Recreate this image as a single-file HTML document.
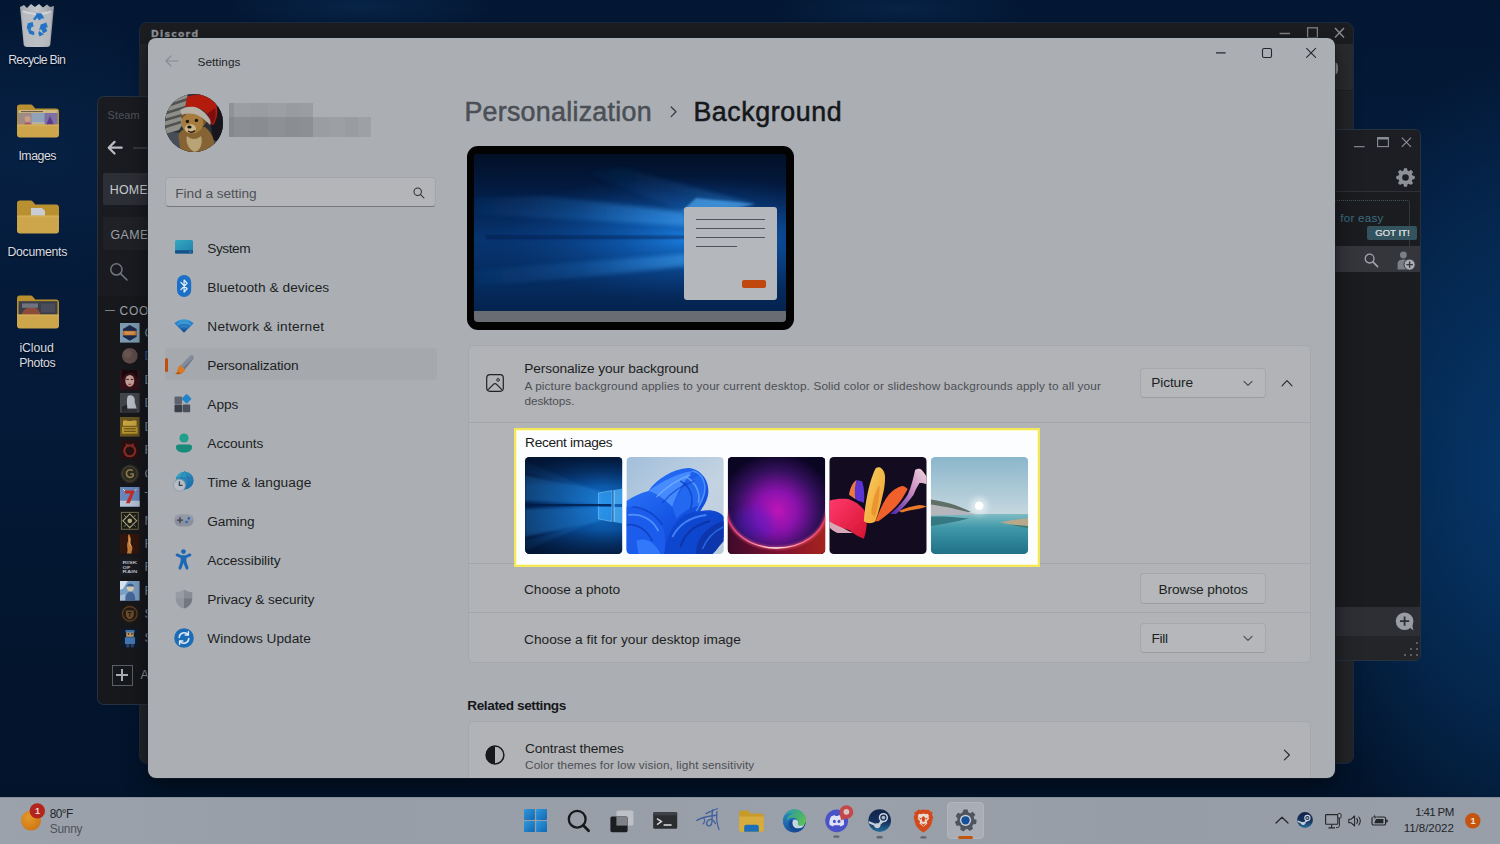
<!DOCTYPE html>
<html lang="en">
<head>
<meta charset="utf-8">
<title>Settings - Personalization - Background</title>
<style>
*{box-sizing:border-box;margin:0;padding:0}
html,body{width:1500px;height:844px;overflow:hidden;background:#04203f}
body{font-family:"Liberation Sans","DejaVu Sans",sans-serif;position:relative;color:#1b1d21}
.abs{position:absolute}
svg{display:block;overflow:visible}
.t{position:absolute;white-space:nowrap}
#desk{position:absolute;left:0;top:0;width:1500px;height:844px;overflow:hidden;
 background:
  radial-gradient(ellipse 230px 420px at 1520px 480px,rgba(6,56,108,.95),rgba(6,56,108,.5) 55%,rgba(6,56,108,0) 100%),
  radial-gradient(ellipse 140px 26px at 360px 6px,rgba(12,46,88,.55),rgba(12,46,88,0) 100%),
  radial-gradient(ellipse 130px 24px at 900px 8px,rgba(12,46,88,.5),rgba(12,46,88,0) 100%),
  radial-gradient(ellipse 220px 140px at 30px 150px,rgba(10,42,82,.45),rgba(10,42,82,0) 100%),
  linear-gradient(180deg,#031733 0,#041a39 20%,#041a38 50%,#03152d 78%,#02132a 100%);}
.win{position:absolute;overflow:hidden}
#tb{position:absolute;left:0;top:797px;width:1500px;height:47px;background:linear-gradient(90deg,#9ba2ac 0,#979ea8 20%,#989fa9 45%,#9aa1aa 55%,#969da6 75%,#999fa9 100%);box-shadow:inset 0 1px 0 #878e99}
</style>
</head>
<body>
<div id="desk"></div>

<svg class="abs" style="left:19px;top:3px" width="36" height="45" viewBox="0 0 36 45"><defs><linearGradient id="rb" x1="0" y1="0" x2="1" y2="0"><stop offset="0" stop-color="#a3a8ae"/><stop offset=".5" stop-color="#c4c8cc"/><stop offset="1" stop-color="#9499a0"/></linearGradient></defs><path d="M1 4 L5 2 L8 5 L12 1 L16 4 L20 1 L24 4.5 L28 1.5 L31 4 L35 3 L31.4 41 C31.3 43 30 44 28 44 H8 C6 44 4.7 43 4.6 41Z" fill="url(#rb)"/><path d="M3 8 L33 8 L30.6 40.5 C30.5 42 29.6 42.8 28 42.8 H8 C6.4 42.8 5.5 42 5.4 40.5Z" fill="#b9bdc2" opacity=".8"/><path d="M4 8 C10 12 14 9 18 12 C23 9 28 12 32 8" stroke="#d9dcdf" stroke-width="1.6" fill="none" opacity=".8"/><g fill="#2273c4" transform="translate(17.6 22) scale(1.22) translate(-17.6 -22)"><path d="M14.6 17.2 L18 12.6 L21.4 17.2 L19.6 18.2 L18 16 L16.4 18.2Z"/><path d="M17 12.4 H21.4 L24 16.4 L20.8 16.8Z"/><path d="M10.4 20.6 L14.4 19.6 L15.2 23.6 L13.6 23.2 L12.6 26.4 L9.4 24.6Z"/><path d="M10 25 L15.6 27.6 L15.6 30.4 L11.6 29.2Z"/><path d="M25.6 20 L26.8 24 L25 24 L26.4 27 L23 29 L21.4 25.4 L19.6 26.4 L21 21.6Z"/><path d="M19.6 27 L23.6 29.6 L20 31.4 L19 29Z"/></g></svg>
<div class="t" style="left:8.2px;top:52.0px;font-size:12.3px;line-height:16px;letter-spacing:-0.72px;color:#d9dde2;text-shadow:0 1px 2px rgba(0,0,0,.8);">Recycle Bin</div>
<svg class="abs" style="left:16.5px;top:104px" width="42" height="34" viewBox="0 0 42 34"><path d="M0 3.2 C0 1.4 1.2 .4 2.8 .4 H13.2 C14.4 .4 15.2 .8 16 1.8 L18.2 4.4 H39.2 C40.8 4.4 42 5.6 42 7.2 V22.6 H0Z" fill="#b8902f"/><rect x="1.6" y="6" width="38.8" height="15" fill="#8f92a4"/><rect x="1.6" y="6" width="38.8" height="3" fill="#cdb983"/><path d="M4 7.6 H26" stroke="#5a4a3a" stroke-width=".9"/><rect x="1.6" y="9" width="13" height="12" fill="#a08a86"/><rect x="14.6" y="9" width="13" height="12" fill="#8fa2b8"/><rect x="27.6" y="9" width="12.8" height="12" fill="#7e70a2"/><circle cx="10.6" cy="15" r="3" fill="#cb9c86"/><path d="M6.6 21 C7 17.6 14 17.6 14.6 21Z" fill="#b04a6a"/><path d="M29 21 L33 12 L37 21Z" fill="#5a3a8a"/><path d="M15 18 H27.6 V21 H15Z" fill="#b8b0a0"/><path d="M0 20.6 H42 V30.4 C42 32.2 40.8 33.4 39.2 33.4 H2.8 C1.2 33.4 0 32.2 0 30.4Z" fill="#cda64c"/><path d="M0 20.6 H42 V22.200000000000003 H0Z" fill="#d9b45c" opacity=".6"/></svg>
<div class="t" style="left:18.4px;top:148.0px;font-size:12.3px;line-height:16px;letter-spacing:-0.44px;color:#d9dde2;text-shadow:0 1px 2px rgba(0,0,0,.8);">Images</div>
<svg class="abs" style="left:16.5px;top:199.6px" width="42" height="34" viewBox="0 0 42 34"><path d="M0 3.2 C0 1.4 1.2 .4 2.8 .4 H13.2 C14.4 .4 15.2 .8 16 1.8 L18.2 4.4 H39.2 C40.8 4.4 42 5.6 42 7.2 V17.6 H0Z" fill="#b8902f"/><path d="M14 8 H25 L28 11 V19 H14Z" fill="#c9ccd2"/><path d="M0 15.6 H42 V30.4 C42 32.2 40.8 33.4 39.2 33.4 H2.8 C1.2 33.4 0 32.2 0 30.4Z" fill="#cda64c"/><path d="M0 15.6 H42 V17.2 H0Z" fill="#d9b45c" opacity=".6"/></svg>
<div class="t" style="left:7.4px;top:243.6px;font-size:12.3px;line-height:16px;letter-spacing:-0.28px;color:#d9dde2;text-shadow:0 1px 2px rgba(0,0,0,.8);">Documents</div>
<svg class="abs" style="left:16.5px;top:295.4px" width="42" height="34" viewBox="0 0 42 34"><path d="M0 3.2 C0 1.4 1.2 .4 2.8 .4 H13.2 C14.4 .4 15.2 .8 16 1.8 L18.2 4.4 H39.2 C40.8 4.4 42 5.6 42 7.2 V21.6 H0Z" fill="#b8902f"/><rect x="1.6" y="6.2" width="38.8" height="14" fill="#3c3e4a"/><path d="M4 20 C8 10.6 16 10.4 21 14.6 L24 20Z" fill="#8c4c3a"/><rect x="5" y="8.4" width="16" height="4.4" fill="#6f7480"/><rect x="24" y="8.4" width="14" height="9" fill="#4a4c5a"/><path d="M0 19.6 H42 V30.4 C42 32.2 40.8 33.4 39.2 33.4 H2.8 C1.2 33.4 0 32.2 0 30.4Z" fill="#cda64c"/><path d="M0 19.6 H42 V21.200000000000003 H0Z" fill="#d9b45c" opacity=".6"/></svg>
<div class="t" style="left:19.4px;top:339.6px;font-size:12.3px;line-height:16px;letter-spacing:-0.10px;color:#d9dde2;text-shadow:0 1px 2px rgba(0,0,0,.8);">iCloud</div>
<div class="t" style="left:19.2px;top:355.4px;font-size:12.3px;line-height:16px;letter-spacing:-0.35px;color:#d9dde2;text-shadow:0 1px 2px rgba(0,0,0,.8);">Photos</div>
<div class="win" id="discord" style="left:139.4px;top:21.5px;width:1214.6px;height:742px;background:#232428;border-radius:8px;border:1px solid #1b2a3f">
<div class="abs" style="left:0;top:0;width:1214px;height:21px;background:#1c1d20"></div>
<div class="abs" style="left:1190px;top:21px;width:24px;height:47px;background:#2a2b2f"></div>
<div class="abs" style="left:1190px;top:67.5px;width:24px;height:1px;background:#1e1f22"></div>
<div class="abs" style="left:1189px;top:39px;width:9px;height:13px;border-radius:6px;background:#8a8d92"></div>
<div class="t" style="left:10.6px;top:5.9px;font-family:'DejaVu Sans','Liberation Sans',sans-serif;font-weight:700;font-size:9.3px;line-height:12px;letter-spacing:1.25px;color:#8f9299;-webkit-text-stroke:.35px #8f9299">Discord</div>
<svg class="abs" style="left:1139px;top:4.5px" width="68" height="12" viewBox="0 0 68 12"><path d="M.6 6.4 H11" stroke="#7f838a" stroke-width="1.5"/><rect x="28.6" y=".8" width="9.8" height="9.8" fill="none" stroke="#7f838a" stroke-width="1.3"/><path d="M56 1 L65 10.6 M65 1 L56 10.6" stroke="#8b8f96" stroke-width="1.4"/></svg>
</div>
<div class="win" id="steam" style="left:97px;top:96px;width:70px;height:609px;background:#1a1b20;border-radius:7px 0 0 7px;border:1px solid #27313f;border-right:none"><div class="abs" style="left:0;top:1px;width:70px;height:608px">
<div class="t" style="left:9.6px;top:9.5px;font-size:10.8px;line-height:14px;letter-spacing:0.18px;color:#4f535c;">Steam</div>
<svg class="abs" style="left:9.4px;top:42.4px" width="16" height="15.4" viewBox="0 0 17 16"><path d="M15.6 8 H2.4 M8 1.8 L1.8 8 L8 14.2" fill="none" stroke="#b9bcc2" stroke-width="2.4" stroke-linecap="round" stroke-linejoin="round"/></svg>
<div class="abs" style="left:35px;top:49.2px;width:20px;height:2px;background:#33363d"></div>
<div class="abs" style="left:4.6px;top:75px;width:70px;height:32px;border-radius:2px;background:#2d2f36"></div>
<div class="t" style="left:11.7px;top:84.0px;font-size:12.4px;line-height:16px;letter-spacing:0.27px;color:#c9ccd1;">HOME</div>
<div class="abs" style="left:4.6px;top:119.4px;width:70px;height:32.4px;background:#1f2126"></div>
<div class="t" style="left:12.5px;top:129.2px;font-size:12.4px;line-height:16px;letter-spacing:0.44px;color:#9da1a8;">GAME</div>
<svg class="abs" style="left:11px;top:164.4px" width="20" height="20" viewBox="0 0 20 20"><circle cx="7.4" cy="7.4" r="5.6" fill="none" stroke="#70747c" stroke-width="1.5"/><path d="M11.6 11.6 L18 18" stroke="#70747c" stroke-width="1.6" stroke-linecap="round"/></svg>
<div class="abs" style="left:0;top:198px;width:70px;height:410px;background:#17181c"></div>
<div class="abs" style="left:7px;top:211.6px;width:9.5px;height:1.4px;background:#7b7f87"></div>
<div class="t" style="left:21.6px;top:204.7px;font-size:12px;line-height:16px;letter-spacing:0.70px;color:#9fa3aa;">COO</div>
<svg class="abs" style="left:21.6px;top:224.9px" width="19.6" height="19.6" viewBox="0 0 20 20"><rect width="20" height="20" fill="#7d9cb2"/><path d="M10 2 L17 6 V14 L10 18 L3 14 V6Z" fill="#1d2a4c"/><rect x="3" y="8" width="14" height="4.6" fill="#c4702c"/><path d="M5 9.4 H15 M5 11.2 H15" stroke="#e8c48a" stroke-width=".7"/></svg>
<div class="t" style="left:46.4px;top:226.9px;font-size:12.5px;line-height:16px;color:#8e9299">C</div>
<svg class="abs" style="left:21.6px;top:248.3px" width="19.6" height="19.6" viewBox="0 0 20 20"><circle cx="10" cy="10" r="9.6" fill="#17171a"/><circle cx="10" cy="10" r="8" fill="#5e4b48"/><circle cx="8" cy="8" r="4" fill="#6d5a56" opacity=".7"/></svg>
<div class="t" style="left:46.4px;top:250.3px;font-size:12.5px;line-height:16px;color:#2d5f9a">D</div>
<svg class="abs" style="left:21.6px;top:271.8px" width="19.6" height="19.6" viewBox="0 0 20 20"><rect width="20" height="20" fill="#34121a"/><path d="M2 0 H18 V9 C16 4 12 3 10 3 C7 3 4 5 2 10Z" fill="#1a0a0e"/><ellipse cx="10" cy="11" rx="4.6" ry="6" fill="#c4a098"/><path d="M6.4 9.6 H9 M11 9.6 H13.6" stroke="#3a1a1a" stroke-width="1"/><path d="M8.6 14.6 H11.4" stroke="#9a2a2a" stroke-width="1.1"/></svg>
<div class="t" style="left:46.4px;top:273.8px;font-size:12.5px;line-height:16px;color:#8e9299">D</div>
<svg class="abs" style="left:21.6px;top:295.2px" width="19.6" height="19.6" viewBox="0 0 20 20"><rect width="20" height="20" fill="#43454d"/><path d="M8 3 C12 1 16 4 15 9 L17 16 H7 C8 12 6 8 8 3Z" fill="#b9bcc3"/><path d="M2 14 L7 12 L8 19 H2Z" fill="#23252b"/><path d="M3 16 H17 V20 H3Z" fill="#2c2e35" opacity=".8"/></svg>
<div class="t" style="left:46.4px;top:297.2px;font-size:12.5px;line-height:16px;color:#8e9299">D</div>
<svg class="abs" style="left:21.6px;top:318.7px" width="19.6" height="19.6" viewBox="0 0 20 20"><rect width="20" height="20" fill="#6a5620"/><path d="M3 4 C6 2 8 5 10 4 C12 5 14 2 17 4 V9 H3Z" fill="#c8a640"/><rect x="2" y="10" width="16" height="7" fill="#b8962f"/><path d="M4 12 H16 M4 14.6 H16" stroke="#5a4618" stroke-width="1"/></svg>
<div class="t" style="left:46.4px;top:320.7px;font-size:12.5px;line-height:16px;color:#8e9299">D</div>
<svg class="abs" style="left:21.6px;top:342.1px" width="19.6" height="19.6" viewBox="0 0 20 20"><rect width="20" height="20" fill="#241214"/><circle cx="10" cy="11" r="5.6" fill="none" stroke="#8c2c22" stroke-width="2.2"/><path d="M6 4 L9 7 M14 4 L11 7" stroke="#8c2c22" stroke-width="1.6"/></svg>
<div class="t" style="left:46.4px;top:344.1px;font-size:12.5px;line-height:16px;color:#8e9299">F</div>
<svg class="abs" style="left:21.6px;top:365.6px" width="19.6" height="19.6" viewBox="0 0 20 20"><circle cx="10" cy="10" r="9.6" fill="#2c2a22"/><circle cx="10" cy="10" r="7.6" fill="none" stroke="#4a4636" stroke-width="1"/><path d="M13 6.6 C9 4.6 6 7 6.6 10.4 C7 13.6 11 14.6 13.4 12.4 V10.2 H10.4" fill="none" stroke="#8d7d4e" stroke-width="1.7"/></svg>
<div class="t" style="left:46.4px;top:367.6px;font-size:12.5px;line-height:16px;color:#8e9299">G</div>
<svg class="abs" style="left:21.6px;top:389.0px" width="19.6" height="19.6" viewBox="0 0 20 20"><rect width="20" height="20" fill="#6888bc"/><path d="M0 14 H20 V20 H0Z" fill="#b8c4d8"/><path d="M5 3.6 H15 L10 16.6 H6 L10.6 6.6 H5Z" fill="#c42c28"/><path d="M3 2 L5 4 M17 2 L15 4" stroke="#e8e0c0" stroke-width="1"/></svg>
<div class="t" style="left:46.4px;top:391.0px;font-size:12.5px;line-height:16px;color:#8e9299">T</div>
<svg class="abs" style="left:21.6px;top:412.5px" width="19.6" height="19.6" viewBox="0 0 20 20"><rect width="20" height="20" fill="#1b1b17"/><rect x="1.4" y="1.4" width="17.2" height="17.2" fill="none" stroke="#7a7458" stroke-width=".9"/><path d="M10 3 L17 10 L10 17 L3 10Z" fill="none" stroke="#b4ab84" stroke-width="1.1"/><circle cx="10" cy="10" r="2.4" fill="#b4ab84"/><path d="M4 4 L7 7 M16 4 L13 7 M4 16 L7 13 M16 16 L13 13" stroke="#8a8464" stroke-width="1"/></svg>
<div class="t" style="left:46.4px;top:414.5px;font-size:12.5px;line-height:16px;color:#8e9299">M</div>
<svg class="abs" style="left:21.6px;top:435.9px" width="19.6" height="19.6" viewBox="0 0 20 20"><rect width="20" height="20" fill="#33160e"/><path d="M9 0 C13 4 8 8 12 12 C14 15 11 18 12 20 H7 C9 16 6 12 8 8 C9 5 7 3 9 0Z" fill="#c27c3a"/><path d="M10 4 C11 7 9 9 11 12" stroke="#f0c070" stroke-width="1" fill="none"/></svg>
<div class="t" style="left:46.4px;top:437.9px;font-size:12.5px;line-height:16px;color:#8e9299">F</div>
<svg class="abs" style="left:21.6px;top:459.4px" width="19.6" height="19.6" viewBox="0 0 20 20"><rect width="20" height="20" fill="#191b21"/><text x="2.6" y="7.6" font-family="Liberation Sans,sans-serif" font-size="3.7" font-weight="700" fill="#b9bcc3" textLength="15" lengthAdjust="spacingAndGlyphs">RISK</text><text x="2.6" y="11.8" font-family="Liberation Sans,sans-serif" font-size="3.7" font-weight="700" fill="#b9bcc3" textLength="8" lengthAdjust="spacingAndGlyphs">OF</text><text x="2.6" y="16" font-family="Liberation Sans,sans-serif" font-size="3.7" font-weight="700" fill="#b9bcc3" textLength="15" lengthAdjust="spacingAndGlyphs">RAIN</text></svg>
<div class="t" style="left:46.4px;top:461.4px;font-size:12.5px;line-height:16px;color:#8e9299">F</div>
<svg class="abs" style="left:21.6px;top:482.8px" width="19.6" height="19.6" viewBox="0 0 20 20"><rect width="20" height="20" fill="#7ba0c6"/><path d="M0 0 L8 0 L3 8 L0 9Z" fill="#d8e2ee"/><circle cx="10.6" cy="7" r="3.6" fill="#d8ceb0"/><path d="M6.4 5.6 C8 1.6 13 1.6 14.8 5.6Z" fill="#3f5f92"/><path d="M5.6 20 C5.6 14 7.6 11 10.6 11 C13.6 11 15.6 14 15.6 20Z" fill="#46689c"/><path d="M0 15 L5 13 V20 H0Z" fill="#a8c0d8"/></svg>
<div class="t" style="left:46.4px;top:484.8px;font-size:12.5px;line-height:16px;color:#8e9299">F</div>
<svg class="abs" style="left:21.6px;top:506.3px" width="19.6" height="19.6" viewBox="0 0 20 20"><circle cx="10" cy="10" r="9.6" fill="#241b15"/><circle cx="10" cy="10" r="7.4" fill="none" stroke="#5e4226" stroke-width="1.2"/><path d="M6 6.6 H14 V11 C14 13.6 12 15 10 15.6 C8 15 6 13.6 6 11Z" fill="#6d4c2a"/><path d="M8 8.6 H12 M10 8.6 V13" stroke="#241b15" stroke-width="1.1"/></svg>
<div class="t" style="left:46.4px;top:508.3px;font-size:12.5px;line-height:16px;color:#8e9299">S</div>
<svg class="abs" style="left:21.6px;top:529.8px" width="19.6" height="19.6" viewBox="0 0 20 20"><rect width="20" height="20" fill="#101a28"/><rect x="6.4" y="3" width="7.6" height="6" fill="#c29e6c"/><rect x="5.6" y="2" width="9.2" height="2.6" fill="#3f73ae"/><rect x="5" y="9.4" width="10.4" height="7" fill="#4377b2"/><rect x="6.4" y="16.4" width="3" height="3.4" fill="#2c456c"/><rect x="11" y="16.4" width="3" height="3.4" fill="#2c456c"/><rect x="8" y="5.4" width="1.4" height="1.4" fill="#1a1a1a"/><rect x="11.4" y="5.4" width="1.4" height="1.4" fill="#1a1a1a"/></svg>
<div class="t" style="left:46.4px;top:531.8px;font-size:12.5px;line-height:16px;color:#8e9299">S</div>
<div class="abs" style="left:13.7px;top:566.5px;width:21px;height:21px;border:1px solid #5b5f67"></div><div class="abs" style="left:18.4px;top:576.2px;width:11.6px;height:1.6px;background:#a9adb3"></div><div class="abs" style="left:23.4px;top:571.2px;width:1.6px;height:11.6px;background:#a9adb3"></div>
<div class="t" style="left:42.4px;top:568.5px;font-size:12.5px;line-height:16px;color:#8e9299">A</div>
</div></div>
<div class="win" id="friends" style="left:1326px;top:129px;width:95px;height:532px;background:#1b1c20;border-radius:0 6px 6px 0;border:1px solid #27323f;border-left:none">
<div class="abs" style="left:0;top:0;width:95px;height:62px;background:#1d1e23"></div>
<svg class="abs" style="left:27px;top:6.1px" width="60" height="13" viewBox="0 0 60 13"><path d="M1 10.6 H11.6" stroke="#7e828a" stroke-width="1.2"/><rect x="24.6" y="1.6" width="10.8" height="9" fill="none" stroke="#8a8e96" stroke-width="1.1"/><path d="M24.6 2.6 H35.4" stroke="#8a8e96" stroke-width="2"/><path d="M48.8 1.6 L58 10.8 M58 1.6 L48.8 10.8" stroke="#8a8e96" stroke-width="1.2"/></svg>
<svg class="abs" style="left:70.4px;top:37.9px" width="19" height="19" viewBox="0 0 20 20"><path fill="#8d9096" fill-rule="evenodd" d="M8.3 .6 H11.7 L12.2 3.2 L13.9 3.9 L16.1 2.4 L18.5 4.8 L17 7 L17.7 8.7 L20.3 9.2 V12.6 L17.7 13.1 L17 14.8 L18.5 17 L16.1 19.4 L13.9 17.9 L12.2 18.6 L11.7 21.2 H8.3 L7.8 18.6 L6.1 17.9 L3.9 19.4 L1.5 17 L3 14.8 L2.3 13.1 L-.3 12.6 V9.2 L2.3 8.7 L3 7 L1.5 4.8 L3.9 2.4 L6.1 3.9 L7.8 3.2Z M10 7.2 A3.7 3.7 0 1 0 10 14.6 A3.7 3.7 0 1 0 10 7.2Z" transform="translate(.6 -.3) scale(.94)"/></svg>
<div class="abs" style="left:0;top:61.3px;width:95px;height:1px;background:#2f3137"></div>
<div class="abs" style="left:-20px;top:70px;width:103.5px;height:60px;border:1.4px dotted #47545e;border-radius:3px"></div>
<div class="t" style="left:14.2px;top:80.3px;font-size:11.6px;line-height:15px;letter-spacing:0.27px;color:#3b6c80;">for easy</div>
<div class="abs" style="left:41.4px;top:95.7px;width:49.6px;height:14.2px;border-radius:2px;background:#33545e"></div>
<div class="t" style="left:49.1px;top:96.8px;font-size:9.6px;line-height:12px;letter-spacing:-0.00px;color:#d3d8da;text-shadow:.3px 0 0 #d3d8da;">GOT IT!</div>
<div class="abs" style="left:0;top:115.7px;width:95px;height:26.2px;background:#34363c"></div>
<svg class="abs" style="left:38.4px;top:123.2px" width="15" height="15" viewBox="0 0 15 15"><circle cx="5.6" cy="5.6" r="4.4" fill="none" stroke="#a3a6ac" stroke-width="1.3"/><path d="M8.9 8.9 L13.6 13.6" stroke="#a3a6ac" stroke-width="1.5" stroke-linecap="round"/></svg>
<svg class="abs" style="left:70.5px;top:120.7px" width="19" height="20" viewBox="0 0 19 20"><circle cx="6.4" cy="4" r="3.4" fill="#7b7f86"/><path d="M.6 18.6 V12.4 C.6 9.8 2.6 8.4 6.4 8.4 C10.2 8.4 12.2 9.8 12.2 12.4 V18.6Z" fill="#7b7f86"/><circle cx="12.6" cy="13.6" r="5.6" fill="#a9acb2" stroke="#34363c" stroke-width="1"/><path d="M12.6 10.4 V16.8 M9.4 13.6 H15.8" stroke="#34363c" stroke-width="1.4"/></svg>
<div class="abs" style="left:0;top:477px;width:95px;height:29px;background:#2d2f35"></div>
<svg class="abs" style="left:69px;top:482.4px" width="20" height="20" viewBox="0 0 20 20"><path d="M13 14 L18.4 18.6 L17 12Z" fill="#9a9da3"/><circle cx="9.6" cy="9.2" r="8.8" fill="#9a9da3"/><path d="M9.6 4.6 V13.8 M5 9.2 H14.2" stroke="#2d2f35" stroke-width="1.8"/></svg>
<div class="abs" style="left:0;top:506px;width:95px;height:26px;background:#232529"></div>
<div class="abs" style="left:90px;top:512px;width:2.4px;height:2.4px;background:#5b5f66"></div>
<div class="abs" style="left:84px;top:518px;width:2.4px;height:2.4px;background:#5b5f66"></div>
<div class="abs" style="left:90px;top:518px;width:2.4px;height:2.4px;background:#5b5f66"></div>
<div class="abs" style="left:78px;top:524px;width:2.4px;height:2.4px;background:#5b5f66"></div>
<div class="abs" style="left:84px;top:524px;width:2.4px;height:2.4px;background:#5b5f66"></div>
<div class="abs" style="left:90px;top:524px;width:2.4px;height:2.4px;background:#5b5f66"></div>
</div>
<div class="win" id="set" style="left:148px;top:38.4px;width:1186.6px;height:739.6px;background:#abafb4;border-radius:8px;box-shadow:0 0 0 1px rgba(20,30,45,.6),0 8px 22px rgba(0,0,0,.5)">
<svg class="abs" style="left:17px;top:17px" width="14" height="12" viewBox="0 0 14 12"><path d="M13 6 H1.2 M6 1 L1 6 L6 11" fill="none" stroke="#858990" stroke-width="1.1" stroke-linecap="round" stroke-linejoin="round"/></svg>
<div class="t" style="left:49.5px;top:16.8px;font-size:11.8px;line-height:15px;letter-spacing:0.04px;color:#1d1f23;">Settings</div>
<svg class="abs" style="left:1067px;top:9px" width="104" height="12" viewBox="0 0 104 12"><path d="M1 5.9 H10.6" stroke="#24272c" stroke-width="1.1"/><rect x="47.5" y="1.5" width="9" height="9" rx="1.6" fill="none" stroke="#24272c" stroke-width="1.1"/><path d="M91.6 1.4 L100.6 10.4 M100.6 1.4 L91.6 10.4" stroke="#24272c" stroke-width="1.1" stroke-linecap="round"/></svg>
<div class="abs" id="ava" style="left:17.1px;top:56.1px;width:58.4px;height:57.8px;border-radius:50%;overflow:hidden;background:#2a2e35"><svg width="59" height="59" viewBox="0 0 59 59"><defs><filter id="ab" x="-10%" y="-10%" width="120%" height="120%"><feGaussianBlur stdDeviation=".7"/></filter></defs><rect width="59" height="59" fill="#2b3037"/><g filter="url(#ab)"><path d="M0 40 C10 36 20 40 30 44 C40 48 50 46 59 40 V59 H0Z" fill="#464d57"/><path d="M0 8 L22 0 L26 18 L14 36 L0 40Z" fill="#8e8f89"/><path d="M2 12 L23 5 M1 19 L24 12 M0 26 L21 20 M0 33 L16 28" stroke="#4f5153" stroke-width="2.4"/><path d="M44 18 L59 10 V50 L48 46Z" fill="#14161a"/><path d="M14 46 C12 40 16 36 20 35 L40 33 C46 38 52 46 48 59 H16Z" fill="#866432"/><path d="M22 42 C26 46 32 46 36 42 C38 48 36 56 30 58 C24 56 20 48 22 42Z" fill="#b8a377"/><path d="M15 22 L20 17 L21 29Z M36 19 L43 26 L38 33Z" fill="#745428"/><ellipse cx="27.4" cy="29" rx="11" ry="10.4" fill="#a57c3c"/><ellipse cx="25.4" cy="34.6" rx="5.6" ry="4.4" fill="#c9b68e"/><circle cx="22.4" cy="27.4" r="1.7" fill="#1b140e"/><circle cx="31.4" cy="26.4" r="1.7" fill="#1b140e"/><ellipse cx="24.4" cy="33" rx="2.2" ry="1.6" fill="#17110c"/><path d="M23 37 C25 38.6 28 38.4 30 36.6" stroke="#2a1a14" stroke-width="1.4" fill="none"/><path d="M22 3 C28 0 40 -1 46 4 C53 9 54 20 50 28 C49 31 47 32 46 30 C46 26 44 22 42 20 C38 15 30 12 20 13Z" fill="#b31a11"/><path d="M42 20 C46 24 47 28 46 31 C50 28 52 22 50 14Z" fill="#7f1009"/><path d="M15 16 C19 13 25 12 30 13 C36 15 41 19 44 24 C46 27 46 29 45 31 C42 28 38 24 34 22 C28 19 22 19 17 21Z" fill="#b7b0a5"/></g></svg></div>
<div class="abs" style="left:80.9px;top:64.5px;width:4.8px;height:14.4px;background:#8f9296"></div>
<div class="abs" style="left:85.5px;top:64.5px;width:16.7px;height:14.4px;background:#9b9ea2"></div>
<div class="abs" style="left:102.0px;top:64.5px;width:18.2px;height:14.4px;background:#999ca0"></div>
<div class="abs" style="left:120.0px;top:64.5px;width:18.2px;height:14.4px;background:#9c9fa3"></div>
<div class="abs" style="left:138.0px;top:64.5px;width:14.2px;height:14.4px;background:#989b9f"></div>
<div class="abs" style="left:152.0px;top:64.5px;width:12.7px;height:14.4px;background:#9a9da1"></div>
<div class="abs" style="left:80.9px;top:78.7px;width:4.8px;height:19.5px;background:#85888c"></div>
<div class="abs" style="left:85.5px;top:78.7px;width:16.7px;height:19.5px;background:#8b8e92"></div>
<div class="abs" style="left:102.0px;top:78.7px;width:18.2px;height:19.5px;background:#898c90"></div>
<div class="abs" style="left:120.0px;top:78.7px;width:18.2px;height:19.5px;background:#8d9094"></div>
<div class="abs" style="left:138.0px;top:78.7px;width:14.2px;height:19.5px;background:#8a8d91"></div>
<div class="abs" style="left:152.0px;top:78.7px;width:12.7px;height:19.5px;background:#8c8f93"></div>
<div class="abs" style="left:164.5px;top:78.7px;width:17.7px;height:19.5px;background:#9a9da1"></div>
<div class="abs" style="left:182.0px;top:78.7px;width:15.2px;height:19.5px;background:#9c9fa3"></div>
<div class="abs" style="left:197.0px;top:78.7px;width:13.2px;height:19.5px;background:#999ca0"></div>
<div class="abs" style="left:210.0px;top:78.7px;width:13.4px;height:19.5px;background:#9da0a4"></div>
<div class="abs" style="left:17px;top:139px;width:271px;height:30px;border-radius:4px;background:#b3b5b8;border:1px solid #a2a5a9;border-bottom:1.5px solid #74787e"></div>
<div class="t" style="left:27.3px;top:146.3px;font-size:13.7px;line-height:18px;letter-spacing:-0.06px;color:#4e5157;">Find a setting</div>
<svg class="abs" style="left:265px;top:148.5px" width="12" height="12" viewBox="0 0 12 12"><circle cx="4.7" cy="4.7" r="3.7" fill="none" stroke="#2a2d32" stroke-width="1.05"/><path d="M7.4 7.4 L11 11" stroke="#2a2d32" stroke-width="1.05" stroke-linecap="round"/></svg>
<div class="abs" style="left:17px;top:310px;width:272px;height:32px;border-radius:4px;background:#a5a8ad"></div>
<div class="abs" style="left:16.5px;top:319.5px;width:3px;height:14.5px;border-radius:1.5px;background:#bf4e10"></div>
<svg class="abs" style="left:26.6px;top:202.0px" width="18" height="14" viewBox="0 0 18 14"><defs><linearGradient id="gs" x1="0" y1="0" x2="1" y2="1"><stop offset="0" stop-color="#35a9bf"/><stop offset="1" stop-color="#1f7fae"/></linearGradient></defs><rect x="0" y="0" width="18" height="13.6" rx="1.6" fill="url(#gs)"/><rect x="0" y="10.3" width="18" height="3.3" rx="1.2" fill="#174f86"/><rect x="14" y="11.4" width="2.4" height="1" fill="#3f8fc0"/></svg>
<div class="t" style="left:59.3px;top:201.4px;font-size:13.7px;line-height:18px;letter-spacing:-0.47px;color:#1d1f23;">System</div>
<svg class="abs" style="left:28.5px;top:237.0px" width="14.2" height="22" viewBox="0 0 14.2 22"><rect x="0" y="0" width="14.2" height="22" rx="7.1" fill="#1a6fc6"/><path d="M3.9 7.4 L10.1 13.8 L7.1 17 V5 L10.1 8.2 L3.9 14.6" fill="none" stroke="#e8eef6" stroke-width="1.25" stroke-linejoin="round" stroke-linecap="round"/></svg>
<div class="t" style="left:59.3px;top:240.4px;font-size:13.7px;line-height:18px;letter-spacing:0.05px;color:#1d1f23;">Bluetooth &amp; devices</div>
<svg class="abs" style="left:25.6px;top:279.6px" width="20" height="15" viewBox="0 0 20 15"><defs><linearGradient id="gw" x1="0" y1="0" x2="0" y2="1"><stop offset="0" stop-color="#3d9fdc"/><stop offset=".55" stop-color="#1f70b8"/><stop offset="1" stop-color="#124a8c"/></linearGradient></defs><path d="M10 14.8 L0.3 5.2 A13.8 13.8 0 0 1 19.7 5.2 Z" fill="url(#gw)"/><path d="M3 7.4 A10 10 0 0 1 17 7.4" fill="none" stroke="#7fc0ea" stroke-width=".9" opacity=".55"/><path d="M5.8 10.2 A6 6 0 0 1 14.2 10.2" fill="none" stroke="#5aa2d8" stroke-width=".9" opacity=".5"/></svg>
<div class="t" style="left:59.3px;top:279.5px;font-size:13.7px;line-height:18px;letter-spacing:0.25px;color:#1d1f23;">Network &amp; internet</div>
<svg class="abs" style="left:25.6px;top:316.2px" width="20" height="20" viewBox="0 0 20 20"><path d="M18.8 .8 C20 1.8 19.8 3.4 18.8 4.6 L10.8 14.4 L6.8 10.8 L15.6 1.6 C16.6 .4 17.8 0 18.8 .8Z" fill="#6d7586"/><path d="M15.6 1.6 C16.6 .4 17.8 0 18.8 .8 C19.4 1.3 19.6 2 19.5 2.7 L9 12.8 L6.8 10.8Z" fill="#848c9c"/><path d="M6.6 10.6 L11 14.6 C10.6 18 6.8 19.8 1.2 19 C3.4 17.8 3 15.8 3.6 14 C4.2 12 5.2 10.8 6.6 10.6Z" fill="#d87a26"/><path d="M4.2 16.6 C5 18 6.8 18.4 8.4 17.4 C6.8 19 4 19.4 1.2 19 C2.8 18.4 3.6 17.6 4.2 16.6Z" fill="#b35418"/></svg>
<div class="t" style="left:59.3px;top:318.5px;font-size:13.7px;line-height:18px;letter-spacing:-0.17px;color:#1d1f23;">Personalization</div>
<svg class="abs" style="left:26.1px;top:355.7px" width="19" height="19" viewBox="0 0 19 19"><rect x="0.5" y="2.5" width="7.6" height="7.6" rx="1" fill="#5d6470"/><rect x="0.5" y="10.6" width="7.6" height="7.6" rx="1" fill="#3a3f49"/><rect x="8.6" y="10.6" width="7.6" height="7.6" rx="1" fill="#4a505b"/><rect x="9" y="1.2" width="7.2" height="7.2" rx="1.1" transform="rotate(45 12.6 4.8)" fill="#1f84c9"/></svg>
<div class="t" style="left:59.3px;top:357.6px;font-size:13.7px;line-height:18px;letter-spacing:-0.02px;color:#1d1f23;">Apps</div>
<svg class="abs" style="left:26.6px;top:394.3px" width="18" height="20" viewBox="0 0 18 20"><circle cx="9" cy="5" r="4.6" fill="#1f9f8c"/><path d="M1 14.2 C1 12.6 2 11.6 3.4 11.6 H14.6 C16 11.6 17 12.6 17 14.2 C17 17.6 13.6 19.6 9 19.6 C4.4 19.6 1 17.6 1 14.2Z" fill="#178a7a"/></svg>
<div class="t" style="left:59.3px;top:396.6px;font-size:13.7px;line-height:18px;letter-spacing:-0.03px;color:#1d1f23;">Accounts</div>
<svg class="abs" style="left:25.1px;top:432.8px" width="21" height="21" viewBox="0 0 21 21"><defs><linearGradient id="gt" x1="0" y1="0" x2="1" y2="1"><stop offset="0" stop-color="#3fb0c4"/><stop offset="1" stop-color="#165fa6"/></linearGradient></defs><circle cx="11.6" cy="9.4" r="9" fill="url(#gt)"/><path d="M11.6 .4 C7 4 7 14.6 11.6 18.4 M3 7 H20 M11.6 .4 C16.4 4 16.4 14.6 11.6 18.4" stroke="#1b6cae" stroke-width="1" fill="none" opacity=".6"/><circle cx="6.4" cy="14.2" r="6" fill="#b6bcc6" stroke="#8e96a3" stroke-width=".8"/><path d="M6.4 10.8 V14.4 H9" stroke="#3a3f49" stroke-width="1.3" fill="none" stroke-linecap="round"/></svg>
<div class="t" style="left:59.3px;top:435.7px;font-size:13.7px;line-height:18px;letter-spacing:0.07px;color:#1d1f23;">Time &amp; language</div>
<svg class="abs" style="left:25.6px;top:475.8px" width="20" height="13" viewBox="0 0 20 13"><rect x="0.4" y="0.6" width="19.2" height="11.8" rx="5.9" fill="#8b919c"/><rect x="0.4" y="0.6" width="19.2" height="5.6" rx="5" fill="#9aa0ab" opacity=".6"/><path d="M6 3.6 V8.6 M3.5 6.1 H8.5" stroke="#3c414b" stroke-width="1.4" stroke-linecap="round"/><circle cx="14.8" cy="4.4" r="1.3" fill="#2b64b6"/><circle cx="12.6" cy="8" r="1.3" fill="#2b64b6"/></svg>
<div class="t" style="left:59.3px;top:474.7px;font-size:13.7px;line-height:18px;letter-spacing:-0.14px;color:#1d1f23;">Gaming</div>
<svg class="abs" style="left:27.1px;top:510.9px" width="17" height="21" viewBox="0 0 17 21"><circle cx="8.5" cy="2.6" r="2.4" fill="#1c68b6"/><path d="M0.8 5.2 C1.2 4.4 2 4.2 2.8 4.6 L6.2 6.2 H10.8 L14.2 4.6 C15 4.2 15.8 4.4 16.2 5.2 C16.6 6 16.2 6.8 15.4 7.2 L11.4 9 V12.4 L13.4 18.6 C13.7 19.6 13.2 20.4 12.4 20.6 C11.6 20.8 10.8 20.4 10.5 19.6 L8.5 14 L6.5 19.6 C6.2 20.4 5.4 20.8 4.6 20.6 C3.8 20.4 3.3 19.6 3.6 18.6 L5.6 12.4 V9 L1.6 7.2 C0.8 6.8 0.4 6 0.8 5.2Z" fill="#1c68b6"/></svg>
<div class="t" style="left:59.3px;top:513.8px;font-size:13.7px;line-height:18px;letter-spacing:-0.11px;color:#1d1f23;">Accessibility</div>
<svg class="abs" style="left:26.6px;top:550.4px" width="18" height="20" viewBox="0 0 18 20"><defs><linearGradient id="gp" x1="0" y1="0" x2="1" y2="0"><stop offset="0" stop-color="#8f949d"/><stop offset=".5" stop-color="#8f949d"/><stop offset=".5" stop-color="#727782"/><stop offset="1" stop-color="#727782"/></linearGradient></defs><path d="M9 .6 C11.4 2.4 14 3.2 17.2 3.4 V9.4 C17.2 14.4 14 18 9 19.6 C4 18 .8 14.4 .8 9.4 V3.4 C4 3.2 6.6 2.4 9 .6Z" fill="url(#gp)"/><path d="M9 .6 C11.4 2.4 14 3.2 17.2 3.4 V9.4 H.8 V3.4 C4 3.2 6.6 2.4 9 .6Z" fill="#a2a7b0" opacity=".45"/></svg>
<div class="t" style="left:59.3px;top:552.8px;font-size:13.7px;line-height:18px;letter-spacing:-0.10px;color:#1d1f23;">Privacy &amp; security</div>
<svg class="abs" style="left:25.6px;top:589.5px" width="20" height="20" viewBox="0 0 20 20"><circle cx="10" cy="10" r="9.8" fill="#1a6cb6"/><path d="M5.2 9.4 A5 5 0 0 1 14 6.6 M14.8 10.6 A5 5 0 0 1 6 13.4" stroke="#e3ebf5" stroke-width="1.5" fill="none" stroke-linecap="round"/><path d="M14.4 3.8 V7 H11.2 M5.6 16.2 V13 H8.8" stroke="#e3ebf5" stroke-width="1.5" fill="none" stroke-linecap="round" stroke-linejoin="round"/></svg>
<div class="t" style="left:59.3px;top:591.9px;font-size:13.7px;line-height:18px;letter-spacing:0.00px;color:#1d1f23;">Windows Update</div>
<div class="t" style="left:316.4px;top:56.3px;font-size:26.8px;line-height:35px;letter-spacing:0.28px;color:#4b4f56;-webkit-text-stroke:.55px #4b4f56;">Personalization</div>
<svg class="abs" style="left:522.2px;top:67.19999999999999px" width="7.4" height="11.6" viewBox="0 0 7.4 11.6"><path d="M1.2 1 L6 5.8 L1.2 10.6" fill="none" stroke="#3a3d43" stroke-width="1.3" stroke-linecap="round" stroke-linejoin="round"/></svg>
<div class="t" style="left:545.4px;top:56.3px;font-size:26.8px;line-height:35px;letter-spacing:0.58px;color:#15171b;-webkit-text-stroke:.55px #15171b;">Background</div>
<div class="abs" style="left:318.7px;top:107.6px;width:327.3px;height:184.0px;border-radius:11px;background:#030304"></div>
<div class="abs" id="pv" style="left:326.4px;top:115.3px;width:311.8px;height:168.7px;border-radius:4px;overflow:hidden;background:#04204a"><svg width="312" height="169" viewBox="0 0 312 169"><defs><linearGradient id="pvg" x1="0" y1="0" x2="0" y2="1"><stop offset="0" stop-color="#021026"/><stop offset=".2" stop-color="#031a40"/><stop offset=".5" stop-color="#07346f"/><stop offset=".8" stop-color="#052a5c"/><stop offset="1" stop-color="#042048"/></linearGradient><radialGradient id="pvr" cx="0.68" cy="0.5" r="0.62" gradientTransform="translate(0 .2) scale(1 .6)"><stop offset="0" stop-color="#1c82e4" stop-opacity=".95"/><stop offset=".35" stop-color="#0f60ba" stop-opacity=".7"/><stop offset="1" stop-color="#0a3c80" stop-opacity="0"/></radialGradient><linearGradient id="bm" x1="0" y1="0" x2="1" y2="0"><stop offset="0" stop-color="#2a86dc" stop-opacity=".05"/><stop offset=".5" stop-color="#2a8ee8" stop-opacity=".22"/><stop offset="1" stop-color="#46a8f8" stop-opacity=".6"/></linearGradient><filter id="pb" x="-10%" y="-10%" width="120%" height="120%"><feGaussianBlur stdDeviation="2.2"/></filter><filter id="pb1" x="-10%" y="-10%" width="120%" height="120%"><feGaussianBlur stdDeviation="1"/></filter></defs><rect width="312" height="169" fill="url(#pvg)"/><rect width="312" height="169" fill="url(#pvr)"/><g filter="url(#pb)"><path d="M280 50 L150 14 L110 18 L205 56Z" fill="url(#bm)" opacity=".55"/><path d="M212 58 L70 42 L0 44 L0 60 L212 72Z" fill="url(#bm)"/><path d="M212 112 L100 124 L0 132 L0 116 L212 100Z" fill="url(#bm)" opacity=".9"/></g><g filter="url(#pb1)"><path d="M282 50 L222 44 L208 57 L236 60Z" fill="#58b6ff" opacity=".6"/><rect x="12" y="82" width="200" height="2.4" fill="#02173a" opacity=".6"/></g></svg><div class="abs" style="left:0;top:157.2px;width:312px;height:11.5px;background:#696c72"></div></div>
<div class="abs" style="left:536.0px;top:168.6px;width:93.3px;height:93.3px;border-radius:3px;background:#b4b7bc"></div>
<div class="abs" style="left:548.0px;top:180.4px;width:69.3px;height:1.0px;background:#50535a"></div>
<div class="abs" style="left:548.0px;top:189.4px;width:69.3px;height:1.0px;background:#50535a"></div>
<div class="abs" style="left:548.0px;top:198.4px;width:69.3px;height:1.0px;background:#50535a"></div>
<div class="abs" style="left:548.0px;top:207.4px;width:40.7px;height:1.0px;background:#50535a"></div>
<div class="abs" style="left:594.0px;top:241.6px;width:23.7px;height:8.0px;border-radius:2px;background:#c0470e"></div>
<div class="abs" style="left:319.5px;top:306.6px;width:843.0px;height:318.3px;border-radius:5px;background:#b1b3b6;border:1px solid #a4a7ab"></div>
<div class="abs" style="left:320.5px;top:383.6px;width:841.0px;height:1.0px;background:#a3a6aa"></div>
<div class="abs" style="left:320.5px;top:524.6px;width:841.0px;height:1.0px;background:#a3a6aa"></div>
<div class="abs" style="left:320.5px;top:574.1px;width:841.0px;height:1.0px;background:#a3a6aa"></div>
<svg class="abs" style="left:338.4px;top:335.6px" width="18" height="18" viewBox="0 0 18 18"><rect x=".7" y=".7" width="16.6" height="16.6" rx="3.2" fill="none" stroke="#1f2226" stroke-width="1.2"/><circle cx="12.1" cy="5.9" r="1.35" fill="none" stroke="#1f2226" stroke-width="1"/><path d="M2.2 15.6 L7.6 10.2 C8.4 9.4 9.6 9.4 10.4 10.2 L15.8 15.6" fill="none" stroke="#1f2226" stroke-width="1.2" stroke-linejoin="round"/></svg>
<div class="t" style="left:376.3px;top:322.0px;font-size:13.7px;line-height:18px;letter-spacing:-0.11px;color:#1d1f23;">Personalize your background</div>
<div class="t" style="left:376.4px;top:340.5px;font-size:11.8px;line-height:15px;letter-spacing:0.13px;color:#4c4f55;">A picture background applies to your current desktop. Solid color or slideshow backgrounds apply to all your</div>
<div class="t" style="left:376.4px;top:355.5px;font-size:11.8px;line-height:15px;letter-spacing:-0.05px;color:#4c4f55;">desktops.</div>
<div class="abs" style="left:992.3px;top:329.7px;width:125.7px;height:30.4px;border-radius:4px;background:#b5b7ba;border:1px solid #a4a7ab;border-bottom-color:#999ca0"></div>
<div class="t" style="left:1003.3px;top:335.9px;font-size:13.7px;line-height:18px;letter-spacing:-0.14px;color:#1d1f23;">Picture</div>
<svg class="abs" style="left:1094.5px;top:341.6px" width="10" height="7" viewBox="0 0 10 7"><path d="M1 1.4 L5 5.4 L9 1.4" fill="none" stroke="#484b50" stroke-width="1.1" stroke-linecap="round" stroke-linejoin="round"/></svg>
<svg class="abs" style="left:1132.5px;top:341.1px" width="12" height="8" viewBox="0 0 12 8"><path d="M1 6.8 L6 1.6 L11 6.8" fill="none" stroke="#24272b" stroke-width="1.1" stroke-linecap="round" stroke-linejoin="round"/></svg>
<div class="abs" style="left:366.0px;top:389.9px;width:526.3px;height:138.5px;background:#fcfdfe;border:2.4px solid #f4e85a;box-shadow:inset 0 0 0 1px rgba(255,249,190,.9)"></div>
<div class="t" style="left:377.1px;top:395.5px;font-size:13.7px;line-height:18px;letter-spacing:-0.31px;color:#1a1a1a;">Recent images</div>
<svg class="abs" style="left:377px;top:418.3px" width="504" height="97" viewBox="0 0 504 97"><defs>
<filter id="b1" x="-20%" y="-20%" width="140%" height="140%"><feGaussianBlur stdDeviation="1.2"/></filter>
<filter id="b2" x="-20%" y="-20%" width="140%" height="140%"><feGaussianBlur stdDeviation="2.4"/></filter>
<filter id="b3" x="-40%" y="-40%" width="180%" height="180%"><feGaussianBlur stdDeviation="5"/></filter><filter id="b05" x="-20%" y="-20%" width="140%" height="140%"><feGaussianBlur stdDeviation=".6"/></filter>
<radialGradient id="t1" cx=".8" cy=".5" r=".95"><stop offset="0" stop-color="#1170cc"/><stop offset=".4" stop-color="#08458c"/><stop offset=".8" stop-color="#032250"/><stop offset="1" stop-color="#021636"/></radialGradient>
<linearGradient id="t1v" x1="0" y1="0" x2="0" y2="1"><stop offset="0" stop-color="#02122e" stop-opacity=".85"/><stop offset=".3" stop-color="#02122e" stop-opacity="0"/><stop offset=".75" stop-color="#02122e" stop-opacity="0"/><stop offset="1" stop-color="#02122e" stop-opacity=".7"/></linearGradient>
<linearGradient id="t2" x1="0" y1="0" x2="1" y2="1"><stop offset="0" stop-color="#a2bfdb"/><stop offset=".6" stop-color="#c4d3e2"/><stop offset="1" stop-color="#b9cadb"/></linearGradient>
<linearGradient id="fl" x1="0" y1="0" x2="1" y2="1"><stop offset="0" stop-color="#2f7bff"/><stop offset=".5" stop-color="#1656e6"/><stop offset="1" stop-color="#0a36b4"/></linearGradient>
<radialGradient id="t3" cx=".5" cy=".56" r=".6"><stop offset="0" stop-color="#c016b8"/><stop offset=".35" stop-color="#8a12ac"/><stop offset=".7" stop-color="#35105e"/><stop offset="1" stop-color="#0b0524"/></radialGradient>
<linearGradient id="t3r" x1="0" y1="0" x2="1" y2="0"><stop offset="0" stop-color="#3a0a2a"/><stop offset=".5" stop-color="#7a1030"/><stop offset="1" stop-color="#a8241e"/></linearGradient>
<linearGradient id="arc" x1="0" y1="0" x2="1" y2="0"><stop offset="0" stop-color="#e0246a"/><stop offset=".3" stop-color="#ff8aa0"/><stop offset=".5" stop-color="#fff0ea"/><stop offset=".7" stop-color="#ff8a90"/><stop offset="1" stop-color="#ee2a5a"/></linearGradient>
<linearGradient id="t5s" x1="0" y1="0" x2="0" y2="1"><stop offset="0" stop-color="#8bb6cb"/><stop offset="1" stop-color="#c6d8df"/></linearGradient>
<linearGradient id="t5w" x1="0" y1="0" x2="0" y2="1"><stop offset="0" stop-color="#7fbcc4"/><stop offset=".35" stop-color="#3f98a8"/><stop offset="1" stop-color="#1f7088"/></linearGradient>
<linearGradient id="pk" x1="0" y1="0" x2="1" y2="1"><stop offset="0" stop-color="#ff3a6e"/><stop offset="1" stop-color="#d4142e"/></linearGradient>
<linearGradient id="yl" x1="0" y1="0" x2="1" y2="1"><stop offset="0" stop-color="#f8d060"/><stop offset="1" stop-color="#f0a030"/></linearGradient>
<linearGradient id="rb2" x1="0" y1="1" x2="1" y2="0"><stop offset="0" stop-color="#4a22b0"/><stop offset=".55" stop-color="#c88ac0"/><stop offset="1" stop-color="#f0d8e0"/></linearGradient>
</defs>
<clipPath id="c0"><rect x="0.0" y="0" width="97.4" height="97" rx="4.5"/></clipPath>
<clipPath id="c1"><rect x="101.4" y="0" width="97.4" height="97" rx="4.5"/></clipPath>
<clipPath id="c2"><rect x="202.8" y="0" width="97.4" height="97" rx="4.5"/></clipPath>
<clipPath id="c3"><rect x="304.3" y="0" width="97.4" height="97" rx="4.5"/></clipPath>
<clipPath id="c4"><rect x="405.8" y="0" width="97.4" height="97" rx="4.5"/></clipPath>
<g clip-path="url(#c0)"><rect x="0" y="0" width="97.4" height="97" fill="url(#t1)"/><g filter="url(#b1)"><path d="M76 34 L0 18 L0 44 L76 47Z" fill="#2a9cf0" opacity=".30"/><path d="M76 64 L0 80 L0 52 L76 50Z" fill="#2a9cf0" opacity=".30"/><path d="M76 36 L0 4 L0 16Z" fill="#2a9cf0" opacity=".15"/><path d="M76 62 L0 94 L0 84Z" fill="#2a9cf0" opacity=".15"/></g><g filter="url(#b05)"><path d="M73.5 36 L87 33.5 V47 H73.5Z M73.5 50 H87 V64.5 L73.5 62Z" fill="#36aaff" opacity=".6"/><path d="M89 33 L97.4 31.4 V47 H89Z M89 50 H97.4 V66.6 L89 65Z" fill="#52baff" opacity=".7"/><path d="M73.5 36 L87 33.5 V64.5 L73.5 62Z" fill="none" stroke="#a8e2ff" stroke-width=".6" opacity=".7"/><path d="M89 33 V65" stroke="#d0f0ff" stroke-width=".8" opacity=".8"/></g><rect x="0" y="47" width="86" height="2.2" fill="#031c48" opacity=".8" filter="url(#b05)"/><rect x="0" y="0" width="97.4" height="97" fill="url(#t1v)"/></g>
<g clip-path="url(#c1)"><rect x="101.4" y="0" width="97.4" height="97" fill="url(#t2)"/><g transform="translate(101.4 0)"><path d="M0 97 V44 C6 40 14 36 22 34 C30 22 46 12 62 11 C74 12 82 22 82 34 C82 42 78 48 74 54 C84 52 94 54 97.4 60 V80 C94 88 90 94 86 97Z" fill="url(#fl)"/><g filter="url(#b05)"><path d="M22 34 C36 24 52 16 66 14 C58 24 50 36 46 50 C38 42 30 36 22 34Z" fill="#4a90ff" opacity=".9"/><path d="M46 50 C52 34 62 22 74 18 C80 26 80 38 74 48 C66 50 56 54 50 62Z" fill="#2468f0"/><path d="M60 20 C70 26 74 36 72 46" fill="none" stroke="#6aa4ff" stroke-width="1.6" opacity=".8"/><path d="M54 24 C64 30 68 40 64 52" fill="none" stroke="#0a3ab8" stroke-width="1.6" opacity=".7"/><path d="M0 50 C10 48 22 52 32 62 C38 70 40 80 38 97 H0Z" fill="#1c5cec"/><path d="M2 58 C14 56 26 62 32 74" fill="none" stroke="#5a9aff" stroke-width="1.8" opacity=".85"/><path d="M0 68 C10 66 20 72 26 84" fill="none" stroke="#0a38b4" stroke-width="1.6" opacity=".7"/><path d="M38 97 C40 80 46 66 58 58 C68 54 80 54 90 58 C80 62 72 72 70 84 C69 90 69 94 70 97Z" fill="#0f46d0"/><path d="M46 80 C52 68 64 60 80 58" fill="none" stroke="#4a8cff" stroke-width="1.8" opacity=".85"/><path d="M54 90 C58 76 68 68 84 64" fill="none" stroke="#08309c" stroke-width="2" opacity=".8"/><path d="M70 97 C70 84 78 70 97.4 64 V84 C92 90 88 94 86 97Z" fill="#0a34ac"/><path d="M76 92 C80 82 88 74 97 70" fill="none" stroke="#2f74f0" stroke-width="1.6" opacity=".8"/><path d="M10 84 C18 80 28 84 34 97 H12Z" fill="#3a80ff" opacity=".8"/><path d="M30 40 C40 30 52 22 64 18" fill="none" stroke="#7ab0ff" stroke-width="1.4" opacity=".7"/><path d="M36 46 C44 36 56 28 68 24" fill="none" stroke="#0c3cc0" stroke-width="1.4" opacity=".6"/><path d="M66 14 C76 16 80 26 78 36 C76 44 72 50 70 54" fill="none" stroke="#5a9cff" stroke-width="1.5" opacity=".8"/><path d="M6 50 C16 50 28 56 36 68" fill="none" stroke="#0a36b0" stroke-width="1.5" opacity=".6"/></g></g></g>
<g clip-path="url(#c2)"><rect x="202.8" y="0" width="97.4" height="97" fill="#0b0524"/><g transform="translate(202.8 0)"><rect x="0" y="0" width="97.4" height="97" fill="url(#t3)"/><ellipse cx="26" cy="66" rx="20" ry="16" fill="#3a22d0" opacity=".32" filter="url(#b3)"/><path d="M-2 52 C4 104 94 104 99.4 52 V99 H-2Z" fill="url(#t3r)"/><path d="M-2 52 C4 104 94 104 99.4 52" fill="none" stroke="#ff5a8a" stroke-width="3.4" opacity=".55" filter="url(#b1)"/><path d="M-2 52 C4 104 94 104 99.4 52" fill="none" stroke="url(#arc)" stroke-width="1.5"/></g></g>
<g clip-path="url(#c3)"><rect x="304.3" y="0" width="97.4" height="97" fill="#130c20"/><g transform="translate(304.3 0)" filter="url(#b05)"><path d="M0 60 C6 66 14 72 24 76 L8 76 C4 74 1 72 0 70Z" fill="#d8a8b8"/><path d="M19.8 37.8 C21 30 24 25 27.1 23.2 C30 23 32 24 33 24.6 C35 32 35.5 40 34.5 46 C32 44.5 30 44 28.6 43.7 C25 41 22 39 19.8 37.8Z" fill="#5a34d4"/><path d="M19.8 37.8 C21 30 24 25 27.1 23.2 C25.4 29 25 36 26 42Z" fill="#f0783a"/><path d="M0 43.7 C7 41.6 14 41.4 19.8 42.2 C26 44.6 31 48 34.5 52.5 C37 57 37.8 62 37.4 67.2 C37 73 36 78 34.5 81.8 C29 79.6 24 76.6 19.8 73 C12 70.6 5 67.6 0 64.2Z" fill="url(#pk)"/><path d="M34.5 64.2 C36 44 40 24 46.2 11.4 C48 10 50 10 51.3 10.7 C54 12.6 55.4 15.4 55.7 18.8 C56 25 55 32 53.5 37.8 C51.6 47 49 56 46.2 64.2 C43 66.6 40 66.4 37.4 65.7Z" fill="url(#yl)"/><path d="M42 56 C43 44 46 34 50 28 C51 36 49 48 45.4 60Z" fill="#e88a2a" opacity=".75"/><path d="M46.2 64.2 C50 54 54 45 59.4 37.8 C63 33.6 68 30.4 72.6 29 C75 29.2 77 30.4 78.4 32 C75 38.6 71 44.6 66.7 49.6 C61 55.4 55 60.4 49.1 64.2Z" fill="#f0602a"/><path d="M60.8 56.9 C68 51.4 74 44.8 78.4 37.8 C82 30 84 21 85.8 12.9 C87.6 11.6 89.8 11.4 91.6 12.2 C94 14.4 96 17.2 97.4 20.2 V27.6 C95 26.4 92.6 26 90.2 26.1 C88 29.6 86 33.6 84.3 37.8 C79 45.4 73 51.8 66.7 56.9Z" fill="url(#rb2)"/><path d="M69.6 54 C76 51 83 49 90.2 48 C93 48.2 95.4 48.8 97.4 49.6 C95 50.6 92.6 51.4 90.2 51.8 C84 52.6 78 53.8 72.6 55.4Z" fill="#e87a2a"/></g></g>
<g clip-path="url(#c4)"><g transform="translate(405.8 0)"><rect x="0" y="0" width="97.4" height="58" fill="url(#t5s)"/><rect x="0" y="57" width="97.4" height="40" fill="url(#t5w)"/><circle cx="48.4" cy="48.8" r="9" fill="#fff" opacity=".45" filter="url(#b2)"/><circle cx="48.4" cy="48.8" r="4.3" fill="#fff" filter="url(#b05)"/><g filter="url(#b05)"><path d="M0 42.4 C8 43.4 16 45.4 24 48 C30 50 36 53 40 55 L0 55Z" fill="#5f6e66"/><path d="M0 47.6 C12 49 28 52.6 46 57.4 L0 58.6Z" fill="#b4b6bb"/><path d="M0 59.6 C12 59.4 26 60 38 61.6 C26 64.6 12 67.4 0 69Z" fill="#2f7078" opacity=".85"/><path d="M69.2 65.2 C78 63.4 88 62 97.4 61.5 V68.9 C91 68.6 85 68 79.4 67.4Z" fill="#b9a98a"/><path d="M79.4 67.4 C85 68 91 68.6 97.4 68.9 V71 C91 70.4 85 69.2 79.4 67.4Z" fill="#3f7a70"/></g></g></g>
</svg>
<div class="t" style="left:376.0px;top:542.2px;font-size:13.7px;line-height:18px;letter-spacing:-0.05px;color:#1d1f23;">Choose a photo</div>
<div class="abs" style="left:992.3px;top:534.7px;width:125.7px;height:30.5px;border-radius:4px;background:#b5b7ba;border:1px solid #a4a7ab;border-bottom-color:#999ca0"></div>
<div class="t" style="left:1010.6px;top:542.3px;font-size:13.7px;line-height:18px;letter-spacing:-0.10px;color:#1d1f23;">Browse photos</div>
<div class="t" style="left:376.0px;top:592.8px;font-size:13.7px;line-height:18px;letter-spacing:0.02px;color:#1d1f23;">Choose a fit for your desktop image</div>
<div class="abs" style="left:992.3px;top:584.6px;width:125.7px;height:30.5px;border-radius:4px;background:#b5b7ba;border:1px solid #a4a7ab;border-bottom-color:#999ca0"></div>
<div class="t" style="left:1003.5px;top:592.0px;font-size:13.7px;line-height:18px;letter-spacing:-0.34px;color:#1d1f23;">Fill</div>
<svg class="abs" style="left:1094.5px;top:596.6px" width="10" height="7" viewBox="0 0 10 7"><path d="M1 1.4 L5 5.4 L9 1.4" fill="none" stroke="#484b50" stroke-width="1.1" stroke-linecap="round" stroke-linejoin="round"/></svg>
<div class="t" style="left:319.3px;top:658.6px;font-size:13.6px;line-height:18px;letter-spacing:-0.40px;color:#15171b;font-weight:700;">Related settings</div>
<div class="abs" style="left:319.5px;top:683.0px;width:843.0px;height:78.6px;border-radius:5px;background:#b1b3b6;border:1px solid #a4a7ab"></div>
<svg class="abs" style="left:337.2px;top:706.4px" width="20" height="20" viewBox="0 0 20 20"><circle cx="10" cy="10" r="8.9" fill="none" stroke="#17191c" stroke-width="1.5"/><path d="M10 1.1 A8.9 8.9 0 0 0 10 18.9Z" fill="#17191c"/></svg>
<div class="t" style="left:377.1px;top:701.6px;font-size:13.7px;line-height:18px;letter-spacing:-0.12px;color:#1d1f23;">Contrast themes</div>
<div class="t" style="left:377.0px;top:719.5px;font-size:11.8px;line-height:15px;letter-spacing:0.11px;color:#4c4f55;">Color themes for low vision, light sensitivity</div>
<svg class="abs" style="left:1135px;top:710.6px" width="8" height="12" viewBox="0 0 8 12"><path d="M1.4 1.2 L6.4 6 L1.4 10.8" fill="none" stroke="#24272b" stroke-width="1.1" stroke-linecap="round" stroke-linejoin="round"/></svg>
</div>
<div id="tb">
<svg class="abs" style="left:20.0px;top:6.0px" width="26" height="28" viewBox="0 0 26 28"><defs><radialGradient id="sun" cx=".4" cy=".35" r=".7"><stop offset="0" stop-color="#e39a2a"/><stop offset="1" stop-color="#cf7414"/></radialGradient></defs><circle cx="11" cy="17.6" r="10" fill="url(#sun)"/><circle cx="17.3" cy="7.9" r="7.7" fill="#b3241c"/></svg>
<div class="t" style="left:35.0px;top:8.3px;font-size:9.2px;line-height:12px;letter-spacing:-1.14px;color:#e8d8d6;font-weight:700;">1</div>
<div class="t" style="left:49.8px;top:9.5px;font-size:11.9px;line-height:15px;letter-spacing:-0.58px;color:#22252a;">80°F</div>
<div class="t" style="left:49.8px;top:25.1px;font-size:11.9px;line-height:15px;letter-spacing:-0.26px;color:#4e525a;">Sunny</div>
<svg class="abs" style="left:524.0px;top:12.3px" width="23" height="23" viewBox="0 0 23 23"><defs><linearGradient id="wl" x1="0" y1="0" x2="1" y2="1"><stop offset="0" stop-color="#3298d8"/><stop offset="1" stop-color="#1068b6"/></linearGradient></defs><rect x="0" y="0" width="10.9" height="10.9" rx=".8" fill="url(#wl)"/><rect x="12.1" y="0" width="10.9" height="10.9" rx=".8" fill="url(#wl)"/><rect x="0" y="12.1" width="10.9" height="10.9" rx=".8" fill="url(#wl)"/><rect x="12.1" y="12.1" width="10.9" height="10.9" rx=".8" fill="url(#wl)"/></svg>
<svg class="abs" style="left:567.4px;top:11.7px" width="24" height="24" viewBox="0 0 24 24"><circle cx="10.2" cy="10.2" r="8.4" fill="none" stroke="#17191d" stroke-width="2.3"/><path d="M16.4 16.6 L21.6 21.8" stroke="#17191d" stroke-width="2.8" stroke-linecap="round"/></svg>
<svg class="abs" style="left:610.0px;top:12.5px" width="24" height="23" viewBox="0 0 24 23"><rect x="6.4" y=".6" width="17" height="15" rx="1.6" fill="#c3c6cb" opacity=".85"/><rect x=".4" y="6.6" width="17.2" height="15.6" rx="1.6" fill="#1b1d21"/><rect x="6.4" y="6.6" width="11.2" height="9" fill="#7e8187"/></svg>
<svg class="abs" style="left:652.5px;top:14.8px" width="24.5" height="17" viewBox="0 0 24.5 17"><rect x=".2" y=".2" width="24" height="16.6" rx="1.4" fill="#2b2d31"/><rect x=".2" y=".2" width="24" height="3" rx="1.2" fill="#3d4046"/><path d="M4 6.6 L8.4 9.6 L4 12.6" fill="none" stroke="#d4d6da" stroke-width="1.5"/><path d="M10.6 13 H18.6" stroke="#d4d6da" stroke-width="1.6"/></svg>
<svg class="abs" style="left:696.0px;top:10.5px" width="25" height="24" viewBox="0 0 25 24"><g fill="none" stroke="#3f5f9e" stroke-linecap="round"><path d="M1 12.4 C6 8.6 12 8.2 20.6 7.2" stroke-width="1.5"/><path d="M10 5.6 C13.6 4 16.6 2.4 21.4 .8" stroke-width="1.2"/><path d="M16.6 2 C15.4 6.6 17 12 15.4 16.4 C14.6 18 12.6 18.6 11 17 C9.6 15 11.6 12.4 13.6 11.6 C16 10.8 18 13 19.4 15.6" stroke-width="1.3"/><path d="M21 3.6 C20.2 9 20.6 15 23 21.6" stroke-width="1.2"/><path d="M8 10.6 C9 12.6 8.6 14.6 7 16" stroke-width="1.1"/></g></svg>
<svg class="abs" style="left:738.6px;top:12.6px" width="25" height="22" viewBox="0 0 25 22"><path d="M.2 2.6 C.2 1.2 1.2 .4 2.4 .4 H8 C9 .4 9.6 .8 10.2 1.6 L11.6 3.4 H22.6 C23.8 3.4 24.8 4.4 24.8 5.6 V19.4 C24.8 20.8 23.8 21.8 22.6 21.8 H2.4 C1.2 21.8 .2 20.8 .2 19.4Z" fill="#c89a2a"/><path d="M.2 6.4 H24.8 V19.4 C24.8 20.8 23.8 21.8 22.6 21.8 H2.4 C1.2 21.8 .2 20.8 .2 19.4Z" fill="#d6ac3e"/><path d="M5.2 21.8 V17.2 C5.2 15.6 6.2 14.8 7.6 14.8 H17.4 C18.8 14.8 19.8 15.6 19.8 17.2 V21.8Z" fill="#1c6fb8"/></svg>
<svg class="abs" style="left:781.5px;top:11.8px" width="25" height="24" viewBox="0 0 25 24"><defs><linearGradient id="eg" x1="0" y1="0" x2=".5" y2="1"><stop offset="0" stop-color="#2f97c0"/><stop offset=".5" stop-color="#1f6cb2"/><stop offset="1" stop-color="#164a94"/></linearGradient><linearGradient id="eg2" x1="0" y1="0" x2="1" y2=".7"><stop offset="0" stop-color="#2c9ab4"/><stop offset=".6" stop-color="#44ae72"/><stop offset="1" stop-color="#60c058"/></linearGradient><clipPath id="ecl"><circle cx="12.4" cy="12" r="11.7"/></clipPath></defs><g clip-path="url(#ecl)"><circle cx="12.4" cy="12" r="11.7" fill="url(#eg)"/><path d="M4 3 C8 -1 18 -1 22 3 C26 8 25 14 21 16.4 C18.4 17.6 15.6 16.6 15.8 14.6 C16.6 11.6 14.6 8.8 11 8.8 C8.4 8.8 6 10 4.6 12 C4.8 8 7 5.2 11 4.4 C8 4 5.6 4.4 3 6Z" fill="url(#eg2)"/><path d="M10.8 11.4 C12.4 9.8 15.2 10.4 15.9 12.4 C16.3 13.6 15.9 14.6 15.8 15 C16.4 17.2 20 17.4 22.6 15.2 C21.4 18.6 17.6 20.4 14 19.2 C10.6 18 9.4 14 10.8 11.4Z" fill="#c6d3e2"/><path d="M10.8 11.4 C9.4 14 10.6 18 14 19.2 C16.4 20 19 19.6 21 18 C18.6 21.6 13.6 22.6 10 20.6 C6.6 18.6 6 14 8.4 11.6 C9.2 11 10 11 10.8 11.4Z" fill="#15488f"/></g></svg>
<svg class="abs" style="left:825.0px;top:8.4px" width="29" height="34" viewBox="0 0 29 34"><circle cx="11.7" cy="15.8" r="11.4" fill="#4a52c8"/><path d="M6 11.6 C7.6 10.6 9 10.2 10 10.2 L10.4 11 H13 L13.4 10.2 C14.4 10.2 15.8 10.6 17.4 11.6 C18.8 14.4 19.2 17 19 19.6 C17.8 20.6 16.4 21.2 15.4 21.4 L14.6 20.2 H8.8 L8 21.4 C7 21.2 5.6 20.6 4.4 19.6 C4.2 17 4.6 14.4 6 11.6Z" fill="#dfe2f2"/><ellipse cx="9.4" cy="16.4" rx="1.5" ry="1.7" fill="#4a52c8"/><ellipse cx="14" cy="16.4" rx="1.5" ry="1.7" fill="#4a52c8"/><path d="M21.4 .2 C25.2 .2 28.2 3.2 28.2 7 C28.2 10.8 25.2 13.8 21.4 13.8 C20 13.8 17.6 14.4 16 15.4 C16 13.4 14.6 9.6 14.6 7 C14.6 3.2 17.6 .2 21.4 .2Z" fill="#c4474a"/><circle cx="21.4" cy="6.8" r="2.9" fill="#d8c4c6"/><rect x="8.4" y="30.4" width="6" height="2.4" rx="1.2" fill="#60646c"/></svg>
<svg class="abs" style="left:868.0px;top:11.8px" width="24" height="31" viewBox="0 0 24 31"><defs><linearGradient id="st" x1="0" y1="0" x2="0" y2="1"><stop offset="0" stop-color="#12244a"/><stop offset=".55" stop-color="#15315e"/><stop offset="1" stop-color="#256f9a"/></linearGradient></defs><circle cx="11.7" cy="11.6" r="11.3" fill="url(#st)"/><circle cx="15.4" cy="8.6" r="3.9" fill="none" stroke="#cfd4dc" stroke-width="1.5"/><circle cx="15.4" cy="8.6" r="1.9" fill="#aeb4be"/><path d="M.8 12 L7.4 14.8 C8.4 14.2 9.6 14.2 10.4 14.6 L12.6 11.6 L15.6 13 L12.6 15.4 C12.8 17.6 11 19.4 9 19.2 C7.2 19 6.2 17.8 6 16.6 L1.2 14.6Z" fill="#c9ced6"/><rect x="8.6" y="27" width="6" height="2.4" rx="1.2" fill="#60646c"/></svg>
<svg class="abs" style="left:913.0px;top:11.6px" width="21" height="31" viewBox="0 0 21 31"><path d="M10.4 .4 L13.6 1 L15.4 .4 L17.4 2.4 L19.6 3.2 L19 5.6 L20.2 8 L18.6 14.6 C18 17.4 15.6 20.4 10.4 23.6 C5.2 20.4 2.8 17.4 2.2 14.6 L.6 8 L1.8 5.6 L1.2 3.2 L3.4 2.4 L5.4 .4 L7.2 1Z" fill="#d4491c"/><path d="M10.4 4.6 L12.8 5.2 L14.6 4.8 L16 6.8 L15.4 8.2 L16.2 9.6 L13.6 12.6 L14.4 14.6 L12.4 16 L10.4 17.8 L8.4 16 L6.4 14.6 L7.2 12.6 L4.6 9.6 L5.4 8.2 L4.8 6.8 L6.2 4.8 L8 5.2Z" fill="#e8dcd4"/><path d="M10.4 7 L12.4 9 L11.6 12.4 L10.4 13 L9.2 12.4 L8.4 9Z M8 14 L10.4 15.2 L12.8 14 L10.4 17.4Z M6 8.6 L8.4 9.4 L7.4 10.8Z M14.8 8.6 L12.4 9.4 L13.4 10.8Z" fill="#d4491c"/><rect x="7.4" y="27.2" width="6" height="2.4" rx="1.2" fill="#60646c"/></svg>
<div class="abs" style="left:947px;top:5px;width:37.4px;height:37.4px;border-radius:4px;background:#a9aeb6;border:1px solid #b1b6bd"></div>
<svg class="abs" style="left:953.8px;top:12.0px" width="23.6" height="23" viewBox="0 0 25.6 25.4"><path fill="#4f555e" d="M10.2 .6 H14.8 L15.5 3.7 C16.3 3.95 17 4.3 17.7 4.7 L20.5 3 L23.4 6.4 L21.4 8.8 C21.7 9.5 21.9 10.3 22 11.1 L24.8 12.2 L24.2 16.6 L21.2 16.9 C20.8 17.6 20.4 18.3 19.8 18.9 L20.8 21.8 L17 24.2 L14.8 22 C14 22.2 13.2 22.3 12.4 22.3 L10.6 24.8 L6.6 23 L7.2 20 C6.6 19.5 6 18.9 5.6 18.2 L2.4 18.4 L.8 14.2 L3.4 12.6 C3.4 11.8 3.5 11 3.7 10.2 L1.6 8 L4 4.2 L7 5.2 C7.6 4.7 8.4 4.2 9.2 3.9Z"/><circle cx="12.5" cy="12.5" r="6.2" fill="#c9ced6"/><circle cx="12.5" cy="12.5" r="4.6" fill="#17509a"/></svg>
<div class="abs" style="left:958.3px;top:38.7px;width:15px;height:3px;border-radius:1.5px;background:#c2560f"></div>
<svg class="abs" style="left:1275.0px;top:19.0px" width="14" height="8" viewBox="0 0 14 8"><path d="M1 7 L7 1.2 L13 7" fill="none" stroke="#23262b" stroke-width="1.2" stroke-linecap="round" stroke-linejoin="round"/></svg>
<svg class="abs" style="left:1297.4px;top:15.4px" width="16" height="16" viewBox="0 0 16 16"><circle cx="8" cy="8" r="7.9" fill="url(#st)"/><circle cx="10.4" cy="6" r="2.6" fill="none" stroke="#cfd4dc" stroke-width="1.1"/><circle cx="10.4" cy="6" r="1.1" fill="#aeb4be"/><path d="M.4 8.2 L5 10.2 C5.8 9.8 6.6 9.8 7.2 10.2 L8.6 8 L10.6 9 L8.6 10.6 C8.6 12.2 7.4 13.2 6 13 C4.8 12.8 4.2 12 4 11.4 L.8 10Z" fill="#c9ced6"/></svg>
<svg class="abs" style="left:1324.6px;top:15.6px" width="17" height="16" viewBox="0 0 17 16"><rect x=".6" y="1.6" width="12.2" height="9.6" rx=".8" fill="none" stroke="#23262b" stroke-width="1.15"/><path d="M6.6 11.4 V14.6 M3.4 14.9 H10" stroke="#23262b" stroke-width="1.15"/><rect x="12.8" y=".6" width="3.2" height="4.4" rx=".8" fill="#a9afba" stroke="#23262b" stroke-width="1"/><path d="M14.4 5 V12.4 C14.4 13.8 13.6 14.6 12.4 14.6 H11" fill="none" stroke="#23262b" stroke-width="1"/></svg>
<svg class="abs" style="left:1348.0px;top:17.6px" width="15" height="12" viewBox="0 0 15 12"><path d="M.8 4.2 H3.2 L6.6 1 V11 L3.2 7.8 H.8Z" fill="none" stroke="#23262b" stroke-width="1.05" stroke-linejoin="round"/><path d="M8.8 3.6 C9.8 5 9.8 7 8.8 8.4 M10.8 2 C12.6 4.4 12.6 7.6 10.8 10" fill="none" stroke="#23262b" stroke-width="1.05" stroke-linecap="round"/></svg>
<svg class="abs" style="left:1371.4px;top:16.0px" width="18" height="13" viewBox="0 0 18 13"><rect x="1" y="4" width="13.6" height="8" rx="1.6" fill="none" stroke="#23262b" stroke-width="1.15"/><path d="M15.2 6.6 H16 C16.5 6.6 16.8 6.9 16.8 7.4 V8.6 C16.8 9.1 16.5 9.4 16 9.4 H15.2Z" fill="#23262b"/><path d="M3.2 10.2 L5 6 H12.4 V10.2Z" fill="#23262b"/><path d="M4.4 .4 L1.6 4.4 H3.8 L2.8 7.6 L6.4 3.2 H4Z" fill="#23262b" stroke="#a9afba" stroke-width=".5"/></svg>
<div class="t" style="left:1415.3px;top:8.0px;font-size:11.5px;line-height:15px;letter-spacing:-0.65px;color:#22252a;">1:41 PM</div>
<div class="t" style="left:1403.7px;top:24.2px;font-size:11.5px;line-height:15px;letter-spacing:-0.02px;color:#22252a;">11/8/2022</div>
<svg class="abs" style="left:1464.8px;top:15.7px" width="16" height="16" viewBox="0 0 16 16"><circle cx="7.8" cy="7.8" r="7.7" fill="#c5540f"/></svg>
<div class="t" style="left:1470.6px;top:17.9px;font-size:9.2px;line-height:12px;letter-spacing:-1.14px;color:#f0e2d6;font-weight:700;">1</div>
</div>
</body>
</html>
